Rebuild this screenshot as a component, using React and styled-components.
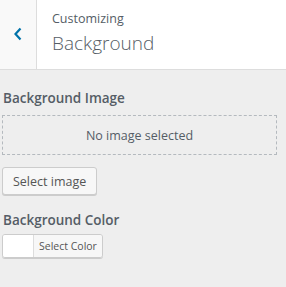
import React from 'react';
import styled, { createGlobalStyle } from 'styled-components';

const GlobalStyle = createGlobalStyle`
    html, body {
        margin: 0;
        padding: 0;
        background: #eeeeee;
        font-family: "Open Sans", "Noto Sans", sans-serif;
        color: #555d66;
    }
`;

const Panel = styled.div`
    width: 286px;
    height: 287px;
    background: #eeeeee;
    overflow: hidden;
`;

const Header = styled.div`
    display: flex;
    height: 69px;
    background: #fff;
    border-bottom: 1px solid #dddddd;
`;

const BackButton = styled.button`
    width: 37px;
    border: 0;
    border-right: 1px solid #dddddd;
    background: #f9f9f9;
    display: flex;
    align-items: center;
    justify-content: center;
    padding: 0 0 2px;
    color: #0073aa;
    cursor: pointer;
`;

const HeaderTitle = styled.div`
    display: flex;
    flex-direction: column;
    padding: 10px 0 0 15px;
`;

const Crumb = styled.span`
    font-size: 12.5px;
    line-height: 18px;
    color: #555d66;
`;

const Title = styled.h1`
    margin: 0;
    font-size: 19px;
    font-weight: 300;
    line-height: 30px;
    color: #555d66;
`;

const Body = styled.div`
    padding: 19px 9px 0 2px;
    display: flex;
    flex-direction: column;
`;

const Label = styled.div`
    font-size: 13.5px;
    font-weight: 600;
    line-height: 18px;
    color: #555d66;
    margin-bottom: ${(p) => p.gap || 6}px;
    padding-left: 1px;
`;

const Placeholder = styled.div`
    height: 38px;
    border: 1px dashed #b4b9be;
    display: flex;
    align-items: center;
    justify-content: center;
    font-size: 12.5px;
    color: #555d66;
    margin-bottom: 12px;
`;

const Button = styled.button`
    align-self: flex-start;
    height: 28px;
    padding: 0 10px;
    border: 1px solid #cccccc;
    border-radius: 3px;
    background: #f7f7f7;
    box-shadow: 0 1px 0 #cccccc;
    font-family: inherit;
    font-size: 12.5px;
    color: #555555;
    margin-bottom: 16px;
`;

const ColorPicker = styled.div`
    display: flex;
    align-self: flex-start;
    height: 22px;
    border: 1px solid #cccccc;
    border-radius: 3px;
    box-shadow: 0 1px 0 #cccccc;
    overflow: hidden;
`;

const Swatch = styled.span`
    width: 30px;
    background: ${(p) => p.color};
    border-right: 1px solid #dddddd;
`;

const ColorButton = styled.span`
    display: flex;
    align-items: center;
    padding: 0 5px;
    background: #f7f7f7;
    font-size: 10.5px;
    color: #555555;
`;

export default function App() {
    return (
        <Panel>
            <GlobalStyle />
            <Header>
                <BackButton aria-label="Back">
                    <svg width="10" height="14" viewBox="0 0 10 14">
                        <path d="M7.5 1.5 L2.5 7 L7.5 12.5" fill="none" stroke="currentColor" strokeWidth="2.2" />
                    </svg>
                </BackButton>
                <HeaderTitle>
                    <Crumb>Customizing</Crumb>
                    <Title>Background</Title>
                </HeaderTitle>
            </Header>
            <Body>
                <Label gap={8}>Background Image</Label>
                <Placeholder>No image selected</Placeholder>
                <Button>Select image</Button>
                <Label gap={5}>Background Color</Label>
                <ColorPicker>
                    <Swatch color="#ffffff" />
                    <ColorButton>Select Color</ColorButton>
                </ColorPicker>
            </Body>
        </Panel>
    );
}
